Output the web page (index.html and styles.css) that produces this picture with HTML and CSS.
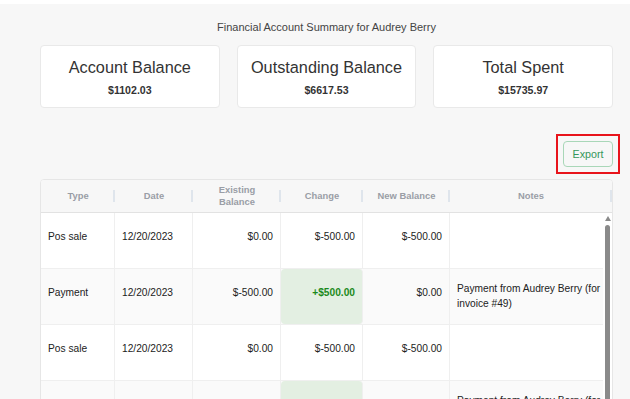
FILE: index.html
```html
<!DOCTYPE html>
<html lang="en">
<head>
    <meta charset="UTF-8">
    <meta name="viewport" content="width=device-width, initial-scale=1.0">
    <title>Account Summary</title>
    <link rel="stylesheet" href="styles.css">
</head>
<body>
    <div id="page">
        <div class="summaryTitle">Financial Account Summary for Audrey Berry</div>

        <div class="cards">
            <div class="card">
                <div class="cardTitle">Account Balance</div>
                <div class="cardValue">$1102.03</div>
            </div>
            <div class="card">
                <div class="cardTitle">Outstanding Balance</div>
                <div class="cardValue">$6617.53</div>
            </div>
            <div class="card">
                <div class="cardTitle">Total Spent</div>
                <div class="cardValue">$15735.97</div>
            </div>
        </div>

        <div class="toolbar">
            <div class="highlight">
                <button class="exportBtn">Export</button>
            </div>
        </div>

        <div class="ledger">
            <div class="ledgerHead">
                <div class="th">Type</div>
                <div class="th">Date</div>
                <div class="th">Existing<br>Balance</div>
                <div class="th">Change</div>
                <div class="th">New Balance</div>
                <div class="th">Notes</div>
            </div>

            <div class="ledgerBody">
                <div class="rows">
                    <div class="row">
                        <div class="td">Pos sale</div>
                        <div class="td">12/20/2023</div>
                        <div class="td num">$0.00</div>
                        <div class="td num">$-500.00</div>
                        <div class="td num">$-500.00</div>
                        <div class="td notes"></div>
                    </div>
                    <div class="row">
                        <div class="td">Payment</div>
                        <div class="td">12/20/2023</div>
                        <div class="td num">$-500.00</div>
                        <div class="td num plus">+$500.00</div>
                        <div class="td num">$0.00</div>
                        <div class="td notes">Payment from Audrey Berry (for invoice #49)</div>
                    </div>
                    <div class="row">
                        <div class="td">Pos sale</div>
                        <div class="td">12/20/2023</div>
                        <div class="td num">$0.00</div>
                        <div class="td num">$-500.00</div>
                        <div class="td num">$-500.00</div>
                        <div class="td notes"></div>
                    </div>
                    <div class="row">
                        <div class="td">Payment</div>
                        <div class="td">12/20/2023</div>
                        <div class="td num">$-500.00</div>
                        <div class="td num plus">+$500.00</div>
                        <div class="td num">$0.00</div>
                        <div class="td notes">Payment from Audrey Berry (for invoice #48)</div>
                    </div>
                </div>

                <!-- scrollbar drawn by hand, headless hides the native one -->
                <div class="scrollTrack">
                    <div class="arrowUp"></div>
                    <div class="thumb"></div>
                </div>
            </div>
        </div>
    </div>
</body>
</html>
```

FILE: styles.css
```css
html{
    overflow: hidden;
}

body{
    margin: 0;
    background-color: #ffffff;
    font-family: "Liberation Sans", Arial, sans-serif;
    color: #222222;
}

#page{
    margin-top: 4px;
    background-color: #f7f7f7;
    padding: 16px 17px 40px 40px;
    min-height: 500px;
}

.summaryTitle{
    text-align: center;
    font-size: 11px;
    line-height: 14px;
    color: #444444;
    margin-bottom: 11px;
}

.cards{
    display: grid;
    grid-template-columns: repeat(3, 1fr);
    gap: 17px;
}

.card{
    background-color: #ffffff;
    border: 1px solid #e9e9e9;
    border-radius: 4px;
    padding: 11px 0 10px;
    text-align: center;
}

.cardTitle{
    font-size: 16.3px;
    line-height: 20px;
    color: #333333;
}

.cardValue{
    margin-top: 6px;
    font-size: 10.6px;
    line-height: 14px;
    font-weight: bold;
    color: #333333;
}

.toolbar{
    display: flex;
    justify-content: flex-end;
    margin-top: 26px;
    margin-bottom: 5px;
    margin-right: -7px;
}

.highlight{
    border: 2px solid #e8141b;
    padding: 5px;
}

.exportBtn{
    display: block;
    width: 50px;
    height: 26px;
    padding: 0;
    background-color: #f7f7f7;
    border: 1px solid #a9d7b8;
    border-radius: 4px;
    color: #35965a;
    font-family: "Liberation Sans", Arial, sans-serif;
    font-size: 10.7px;
}

.ledger{
    border: 1px solid #e6e6e6;
    border-radius: 4px;
    background-color: #ffffff;
    overflow: hidden;
}

.ledgerHead, .row{
    display: grid;
    grid-template-columns: 74px 78px 88px 82px 87px 1fr;
}

.ledgerHead{
    background-color: #f7f7f7;
    border-bottom: 1px solid #e2e2e2;
    height: 32px;
}

.th{
    position: relative;
    display: flex;
    align-items: center;
    justify-content: center;
    text-align: center;
    font-size: 9.4px;
    line-height: 12px;
    font-weight: bold;
    color: #9a9ea6;
}

.th::after{
    content: "";
    position: absolute;
    right: 0;
    top: 10px;
    width: 2px;
    height: 12px;
    background-color: #dfe5ec;
}

.ledgerBody{
    display: flex;
    height: 300px;
    overflow: hidden;
}

.rows{
    flex: 1;
}

.scrollTrack{
    width: 9px;
    display: flex;
    flex-direction: column;
    align-items: center;
    background-color: #ffffff;
}

.arrowUp{
    margin-top: 3px;
    width: 0;
    height: 0;
    border-left: 3px solid transparent;
    border-right: 3px solid transparent;
    border-bottom: 5px solid #8a8a8a;
}

.thumb{
    margin-top: 4px;
    width: 5px;
    height: 260px;
    background-color: #8a8a8a;
    border-radius: 3px;
}

.row{
    height: 55px;
    border-bottom: 1px solid #efefef;
}

.row:nth-child(even){
    background-color: #fafafa;
}

.td{
    display: flex;
    align-items: center;
    padding: 0 7px 8px;
    border-right: 1px solid #efefef;
    font-size: 10.2px;
    line-height: 15px;
    color: #222222;
}

.td.num{
    justify-content: flex-end;
}

.td.notes{
    border-right: none;
    padding: 0 0 2px 7px;
}

.td.plus{
    background-color: #e3efe2;
    border-radius: 4px;
    color: #1c8a1c;
    font-weight: bold;
}
```
